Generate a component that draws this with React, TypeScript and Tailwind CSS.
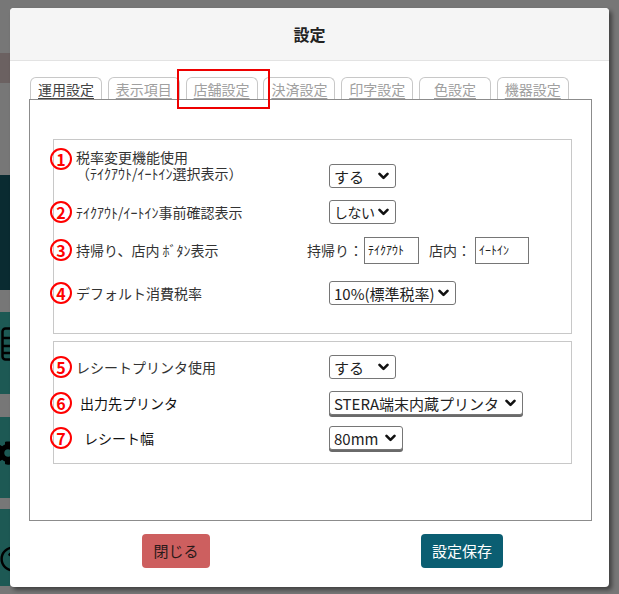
import React from "react";
import { FaCog, FaRegQuestionCircle } from "react-icons/fa";

const font = { fontFamily: '"Noto Sans CJK JP", "Noto Sans", sans-serif' };

function Chevron() {
  return (
    <svg width="11" height="8" viewBox="0 0 11 8" className="flex-none">
      <path d="M1.5 1.8 L5.5 5.8 L9.5 1.8" fill="none" stroke="#111" strokeWidth="2.6" strokeLinecap="round" strokeLinejoin="round" />
    </svg>
  );
}

function Select({ text, w, shadow, small }: { text: string; w: string; shadow?: boolean; small?: boolean }) {
  return (
    <div
      className={
        "h-[24px] border border-[#767676] rounded-[3px] bg-white flex items-center justify-between pl-[4px] pr-[6px] leading-none text-[#222] " +
        (small ? "text-[14px] tracking-[-0.5px] " : "text-[15px] ") +
        w +
        (shadow ? " shadow-[0_2px_0_#6a6a6a]" : "")
      }
    >
      <span className="whitespace-nowrap">{text}</span>
      <Chevron />
    </div>
  );
}

function Num({ n }: { n: string }) {
  return (
    <div className="flex-none w-[22px] h-[22px] ml-[-4px] rounded-full border-[2.5px] border-[#ff0000] text-[#ff0000] font-bold text-[16px] leading-none flex items-center justify-center">
      {n}
    </div>
  );
}

export default function App() {
  const tabs = ["運用設定", "表示項目", "店舗設定", "決済設定", "印字設定", "色設定", "機器設定"];
  return (
    <div className="relative w-[619px] h-[594px] overflow-hidden bg-[#777777]" style={font}>
      {/* background page strip */}
      <div className="flex flex-col w-[10px] h-full overflow-hidden">
        <div className="h-[53px] flex-none" />
        <div className="h-[30px] flex-none bg-[#6b6161]" />
        <div className="h-[92px] flex-none" />
        <div className="h-[115px] flex-none bg-[#0a2b31]" />
        <div className="h-[22px] flex-none" />
        <div className="h-[82px] flex-none bg-[#1d5954] pt-[15px]">
          <svg width="30" height="34" viewBox="0 0 30 34" className="ml-[1px]">
            <rect x="1.5" y="1.5" width="26" height="31" rx="3" fill="none" stroke="#000" strokeWidth="2.5" />
            <path d="M1.5 11 H28 M1.5 19 H28 M1.5 26 H28" stroke="#000" strokeWidth="2.5" />
          </svg>
        </div>
        <div className="h-[23px] flex-none" />
        <div className="h-[81px] flex-none bg-[#1d5954] pt-[24px]">
          <FaCog size={24} className="ml-[-4px]" color="#000" />
        </div>
        <div className="h-[11px] flex-none" />
        <div className="h-[77px] flex-none bg-[#1d5954] pt-[37px]">
          <FaRegQuestionCircle size={26} className="ml-[0px]" color="#000" />
        </div>
      </div>

      {/* modal */}
      <div className="absolute left-[10px] top-[8px] w-[599px] h-[579px] bg-white rounded-[4px] shadow-[3px_3px_4px_rgba(0,0,0,0.45)] flex flex-col">
        <div className="h-[53px] flex-none bg-[#f5f5f5] border-b border-[#e3e3e3] rounded-t-[4px] flex items-center justify-center">
          <span className="text-[16px] font-bold text-[#222]">設定</span>
        </div>

        <div className="pl-[19px] pt-[16px] flex flex-col">
          <div className="flex gap-[5.8px] ml-[1px]">
            {tabs.map((t, i) => (
              <div
                key={t}
                className="w-[72px] h-[22px] border border-b-0 border-[#c8c8c8] rounded-t-[6px] flex items-center justify-center"
              >
                <span className={"text-[14px] leading-none underline underline-offset-[3px] " + (i === 0 ? "text-[#444]" : "text-[#a0a0a0]")}>
                  {t}
                </span>
              </div>
            ))}
          </div>

          <div className="w-[563px] h-[422px] border border-[#8c8c8c] pl-[23px] pr-[19px] pt-[39px]">
            {/* section 1 */}
            <div className="h-[195px] border border-[#c8c8c8]">
              <div className="flex items-start h-[40px] mt-[8px]">
                <Num n="1" />
                <div className="ml-[4px] w-[253px] mt-[1px] text-[14px] leading-[16px] text-[#333]">
                  税率変更機能使用
                  <br />
                  （ﾃｲｸｱｳﾄ/ｲｰﾄｲﾝ選択表示）
                </div>
                <div className="mt-[16px]">
                  <Select text="する" w="w-[67px]" />
                </div>
              </div>

              <div className="flex items-center h-[24px] mt-[12px]">
                <Num n="2" />
                <div className="ml-[4px] w-[253px] text-[14px] text-[#333]">ﾃｲｸｱｳﾄ/ｲｰﾄｲﾝ事前確認表示</div>
                <Select text="しない" w="w-[67px]" small />
              </div>

              <div className="flex items-center h-[28px] mt-[12px]">
                <Num n="3" />
                <div className="ml-[4px] w-[231px] text-[14px] text-[#333]">持帰り、店内 ﾎﾞﾀﾝ表示</div>
                <div className="flex items-center text-[14px] text-[#333]">
                  <span>持帰り：</span>
                  <div className="ml-[1px] w-[55px] h-[27px] border border-[#767676] flex items-center pl-[3px] text-[12px] text-[#222]">ﾃｲｸｱｳﾄ</div>
                  <span className="ml-[10px]">店内：</span>
                  <div className="ml-[4px] w-[54px] h-[27px] border border-[#767676] flex items-center pl-[3px] text-[12px] text-[#222]">ｲｰﾄｲﾝ</div>
                </div>
              </div>

              <div className="flex items-center h-[24px] mt-[17px]">
                <Num n="4" />
                <div className="ml-[4px] w-[253px] text-[14px] text-[#333]">デフォルト消費税率</div>
                <Select text="10%(標準税率)" w="w-[127px]" />
              </div>
            </div>

            {/* section 2 */}
            <div className="h-[123px] border border-[#c8c8c8] mt-[7px]">
              <div className="flex items-center h-[24px] mt-[13px]">
                <Num n="5" />
                <div className="ml-[4px] w-[253px] text-[14px] text-[#333]">レシートプリンタ使用</div>
                <Select text="する" w="w-[67px]" />
              </div>
              <div className="flex items-center h-[24px] mt-[12px]">
                <Num n="6" />
                <div className="ml-[8px] w-[249px] text-[14px] text-[#111]">出力先プリンタ</div>
                <Select text="STERA端末内蔵プリンタ" w="w-[194px]" shadow />
              </div>
              <div className="flex items-center h-[24px] mt-[11px]">
                <Num n="7" />
                <div className="ml-[12px] w-[245px] text-[14px] text-[#111]">レシート幅</div>
                <Select text="80mm" w="w-[74px]" shadow />
              </div>
            </div>
          </div>
        </div>

        <div className="flex mt-[13px]">
          <div className="ml-[132px] w-[68px] h-[34px] rounded-[4px] bg-[#cd5f5f] flex items-center justify-center text-[15px] text-[#2a1a1a]">
            閉じる
          </div>
          <div className="ml-[211px] w-[82px] h-[34px] rounded-[4px] bg-[#0b5e72] flex items-center justify-center text-[15px] text-white">
            設定保存
          </div>
        </div>

        {/* red highlight box */}
        <div className="absolute left-[167px] top-[61px] w-[93px] h-[40px] border-2 border-[#ee0000]" />
      </div>
    </div>
  );
}
